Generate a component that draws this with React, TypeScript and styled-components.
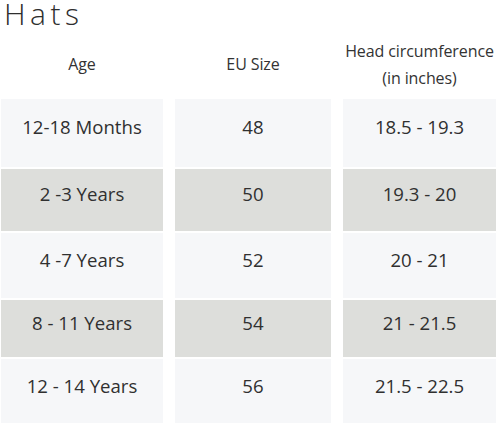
import styled, { createGlobalStyle } from "styled-components"

const Global = createGlobalStyle`
  html, body { margin: 0; padding: 0; background: #ffffff; }
  body { font-family: "Open Sans", "Noto Sans", sans-serif; color: #333333; }
`

const Page = styled.div`
  width: 500px;
  height: 423px;
  overflow: hidden;
`

const Title = styled.h1`
  margin: 0;
  padding-left: 4px;
  height: 28px;
  font-size: 30px;
  line-height: 28px;
  font-weight: 300;
  letter-spacing: 4.5px;
  color: #2e2e2e;
`

const Table = styled.div`
  display: grid;
  grid-template-columns: 162px 156px 153px;
  grid-template-rows: 69px 68px 62px 65px 57px 66px;
  column-gap: 12px;
  row-gap: 2px;
  padding-left: 1px;
`

const Head = styled.div`
  display: flex;
  align-items: center;
  justify-content: center;
  text-align: center;
  white-space: nowrap;
  padding-top: 4px;
  font-size: 16px;
  line-height: 27px;
  letter-spacing: -0.1px;
  color: #333333;
`

const Cell = styled.div<{ $shade: boolean }>`
  display: flex;
  align-items: center;
  justify-content: center;
  padding-bottom: 13px;
  box-sizing: border-box;
  font-size: 18.6px;
  color: #303030;
  background: ${(p) => (p.$shade ? "#dddedb" : "#f6f7f9")};
`

const rows = [
  ["12-18 Months", "48", "18.5 - 19.3"],
  ["2 -3 Years", "50", "19.3 - 20"],
  ["4 -7 Years", "52", "20 - 21"],
  ["8 - 11 Years", "54", "21 - 21.5"],
  ["12 - 14 Years", "56", "21.5 - 22.5"],
]

export default function App() {
  return (
    <Page>
      <Global />
      <Title>Hats</Title>
      <Table>
        <Head>Age</Head>
        <Head>EU Size</Head>
        <Head>
          Head circumference
          <br />
          (in inches)
        </Head>
        {rows.map((r, i) =>
          r.map((v, j) => (
            <Cell key={i + "-" + j} $shade={i % 2 === 1}>
              {v}
            </Cell>
          ))
        )}
      </Table>
    </Page>
  )
}
